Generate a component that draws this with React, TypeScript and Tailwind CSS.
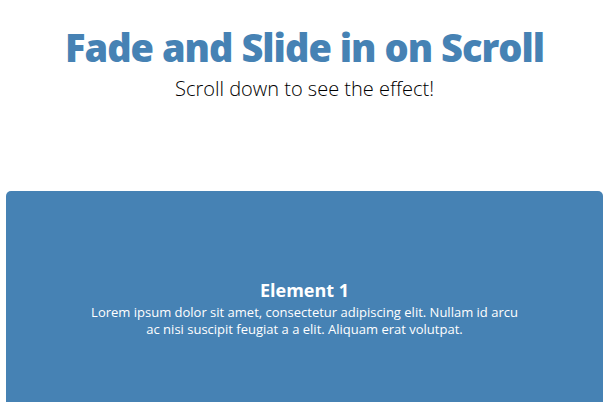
import React from 'react';

const FONT = { fontFamily: '"Open Sans", "Noto Sans", sans-serif' };

export default function App() {
  return (
    <div className="min-h-screen bg-white overflow-hidden" style={FONT}>
      <header className="pt-[22px] text-center">
        <h1 className="text-[38px] leading-[50px] font-extrabold tracking-[-1px] text-[#4682b4]">Fade and Slide in on Scroll</h1>
        <p className="mt-[3px] text-[20px] leading-[28px] font-light text-black">Scroll down to see the effect!</p>
      </header>

      <div className="mt-[88px] mx-[6px]">
        <div className="bg-[#4682b4] rounded-[5px] h-[250px] flex flex-col items-center justify-center text-center text-white px-[80px] pb-[16px]">
          <h2 className="text-[18px] leading-[22px] font-bold">Element 1</h2>
          <p className="mt-[3px] text-[13px] leading-[17px] max-w-[430px]">
            Lorem ipsum dolor sit amet, consectetur adipiscing elit. Nullam id arcu ac nisi suscipit feugiat a a elit. Aliquam erat volutpat.
          </p>
        </div>
      </div>
    </div>
  );
}
